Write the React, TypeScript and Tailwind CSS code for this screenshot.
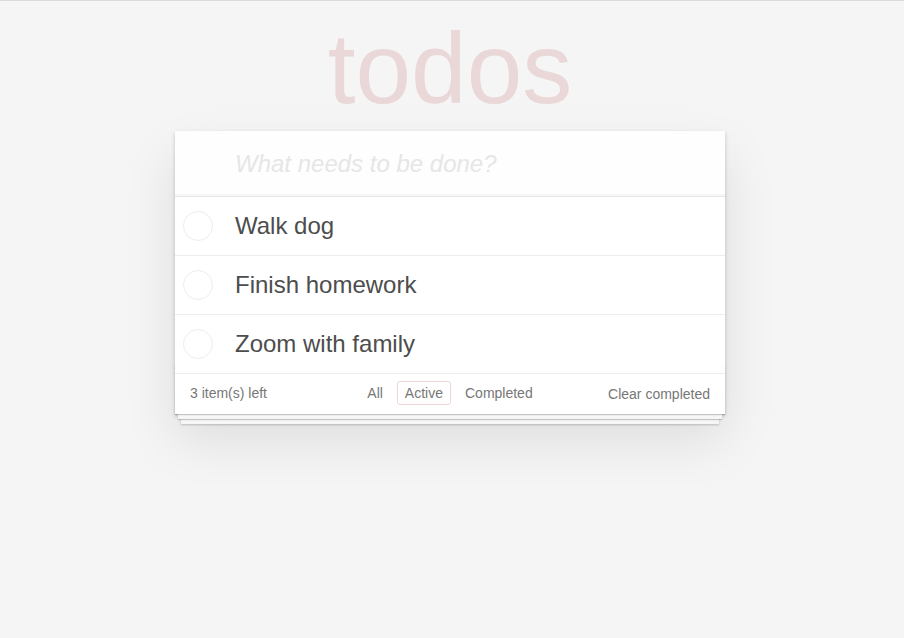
import React from "react";

const todos = ["Walk dog", "Finish homework", "Zoom with family"];

export default function App() {
  return (
    <div
      className="min-h-screen bg-[#f5f5f5] border-t border-[#d9d9d9] text-[#4d4d4d] pr-[4px]"
      style={{ fontFamily: '"Liberation Sans", Arial, Helvetica, sans-serif' }}
    >
      <div className="w-[550px] mx-auto">
        <h1 className="h-[130px] leading-[135px] text-[100px] font-thin text-center text-[rgba(175,47,47,0.15)]">
          todos
        </h1>
        <section className="relative bg-white shadow-[0_2px_4px_0_rgba(0,0,0,0.2),0_25px_50px_0_rgba(0,0,0,0.1)]">
          <input
            className="block w-full h-[65px] pl-[60px] pr-4 text-[24px] leading-[34px] italic outline-none bg-[rgba(0,0,0,0.003)] shadow-[inset_0_-2px_1px_rgba(0,0,0,0.03)] placeholder:text-[#e6e6e6] placeholder:italic placeholder:font-light"
            placeholder="What needs to be done?"
          />
          <ul className="border-t border-[#e6e6e6]">
            {todos.map((t) => (
              <li
                key={t}
                className="flex items-center h-[59px] border-b border-[#ededed] text-[24px]"
              >
                <span className="ml-[8px] w-[30px] h-[30px] rounded-full border border-[#ededed] shrink-0" />
                <span className="ml-[22px] leading-[29px] pb-[2px]">{t}</span>
              </li>
            ))}
          </ul>
          <footer className="relative h-[40px] px-[15px] pb-[2px] text-[14px] text-[#777] grid grid-cols-[1fr_auto_1fr] items-center">
            <div className="absolute inset-x-0 bottom-0 h-[50px] overflow-hidden pointer-events-none shadow-[0_1px_1px_rgba(0,0,0,0.2),0_8px_0_-3px_#f6f6f6,0_9px_1px_-3px_rgba(0,0,0,0.2),0_16px_0_-6px_#f6f6f6,0_17px_2px_-6px_rgba(0,0,0,0.2)]" />
            <span className="relative">3 item(s) left</span>
            <ul className="relative flex gap-[6px]">
              <li className="px-[7px] py-[3px] leading-[16px] border border-transparent rounded-[3px]">All</li>
              <li className="px-[7px] py-[3px] leading-[16px] border border-[rgba(175,47,47,0.2)] rounded-[3px]">Active</li>
              <li className="px-[7px] py-[3px] leading-[16px] border border-transparent rounded-[3px]">Completed</li>
            </ul>
            <span className="relative text-right leading-[20px] pt-[2px]">Clear completed</span>
          </footer>
        </section>
      </div>
    </div>
  );
}
